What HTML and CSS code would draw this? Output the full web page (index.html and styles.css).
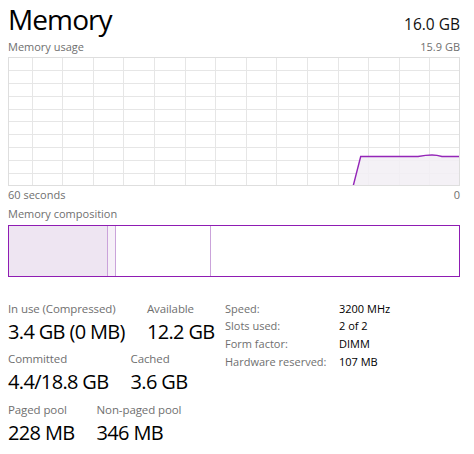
FILE: index.html
```html
<!DOCTYPE html>
<html>
<head>
<meta charset="utf-8">
<link rel="stylesheet" href="styles.css">
</head>
<body>
<div class="panel">
  <div class="head">
    <div class="title">Memory</div>
    <div class="total">16.0 GB</div>
  </div>
  <div class="caption-row mt3">
    <span>Memory usage</span>
    <span>15.9 GB</span>
  </div>
  <svg class="graph" width="452" height="129" viewBox="0 0 452 129">
    <g stroke="#e6e6e6" stroke-width="1">
      <line x1="0" y1="13.5" x2="452" y2="13.5"/>
      <line x1="0" y1="26.5" x2="452" y2="26.5"/>
      <line x1="0" y1="39.5" x2="452" y2="39.5"/>
      <line x1="0" y1="52.5" x2="452" y2="52.5"/>
      <line x1="0" y1="64.5" x2="452" y2="64.5"/>
      <line x1="0" y1="77.5" x2="452" y2="77.5"/>
      <line x1="0" y1="90.5" x2="452" y2="90.5"/>
      <line x1="0" y1="103.5" x2="452" y2="103.5"/>
      <line x1="0" y1="116.5" x2="452" y2="116.5"/>
      <line x1="24.5" y1="0" x2="24.5" y2="129"/>
      <line x1="54.5" y1="0" x2="54.5" y2="129"/>
      <line x1="85.5" y1="0" x2="85.5" y2="129"/>
      <line x1="115.5" y1="0" x2="115.5" y2="129"/>
      <line x1="146.5" y1="0" x2="146.5" y2="129"/>
      <line x1="177.5" y1="0" x2="177.5" y2="129"/>
      <line x1="207.5" y1="0" x2="207.5" y2="129"/>
      <line x1="238.5" y1="0" x2="238.5" y2="129"/>
      <line x1="268.5" y1="0" x2="268.5" y2="129"/>
      <line x1="299.5" y1="0" x2="299.5" y2="129"/>
      <line x1="330.5" y1="0" x2="330.5" y2="129"/>
      <line x1="360.5" y1="0" x2="360.5" y2="129"/>
      <line x1="391.5" y1="0" x2="391.5" y2="129"/>
      <line x1="421.5" y1="0" x2="421.5" y2="129"/>
    </g>
    <path d="M345.3 128.5 L352.7 99.5 L410 99.5 Q418 98 424 98 Q429 98 434 99.5 L452 99.5 L452 128.5 Z" fill="#f2eef4" fill-opacity="0.85"/>
    <path d="M345.3 128.5 L352.7 99.5 L410 99.5 Q418 98 424 98 Q429 98 434 99.5 L452 99.5" fill="none" stroke="#9426b8" stroke-width="1.4"/>
    <rect x="0.5" y="0.5" width="451" height="128" fill="none" stroke="#dedede" stroke-width="1"/>
  </svg>
  <div class="caption-row mt1">
    <span>60 seconds</span>
    <span>0</span>
  </div>
  <div class="caption-row mt4">
    <span>Memory composition</span>
  </div>
  <div class="composition">
    <div class="seg seg-inuse"></div>
    <div class="seg seg-modified"></div>
    <div class="seg seg-standby"></div>
    <div class="seg seg-free"></div>
  </div>
  <div class="stats">
    <div class="stats-left">
      <div class="stat-row">
        <div class="stat">
          <div class="stat-label">In use (Compressed)</div>
          <div class="stat-value">3.4 GB (0 MB)</div>
        </div>
        <div class="stat">
          <div class="stat-label">Available</div>
          <div class="stat-value">12.2 GB</div>
        </div>
      </div>
      <div class="stat-row">
        <div class="stat">
          <div class="stat-label">Committed</div>
          <div class="stat-value">4.4/18.8 GB</div>
        </div>
        <div class="stat">
          <div class="stat-label">Cached</div>
          <div class="stat-value">3.6 GB</div>
        </div>
      </div>
      <div class="stat-row">
        <div class="stat">
          <div class="stat-label">Paged pool</div>
          <div class="stat-value">228 MB</div>
        </div>
        <div class="stat">
          <div class="stat-label">Non-paged pool</div>
          <div class="stat-value">346 MB</div>
        </div>
      </div>
    </div>
    <div class="props">
      <div class="prop-label">Speed:</div><div class="prop-value">3200 MHz</div>
      <div class="prop-label">Slots used:</div><div class="prop-value">2 of 2</div>
      <div class="prop-label">Form factor:</div><div class="prop-value">DIMM</div>
      <div class="prop-label">Hardware reserved:</div><div class="prop-value">107 MB</div>
    </div>
  </div>
</div>
</body>
</html>
```
FILE: styles.css
```css
html, body {
  margin: 0;
  padding: 0;
  background: #ffffff;
}
body {
  font-family: "Open Sans", "Noto Sans", sans-serif;
  color: #000;
}
.panel {
  width: 452px;
  padding: 2px 14px 0 8px;
}
.head {
  display: flex;
  justify-content: space-between;
  align-items: baseline;
  height: 34px;
}
.title {
  font-size: 28px;
  line-height: 34px;
  letter-spacing: -0.9px;
}
.total {
  font-size: 15.5px;
  line-height: 34px;
  color: #111;
}
.caption-row {
  display: flex;
  justify-content: space-between;
  font-size: 11px;
  line-height: 15px;
  color: #6f6f6f;
}
.mt1 { margin-top: 1px; }
.mt3 { margin-top: 3px; }
.mt4 { margin-top: 4px; }
.graph {
  display: block;
  margin-top: 3px;
}
.composition {
  margin-top: 4px;
  height: 50px;
  border: 1px solid #8f1cb3;
  display: flex;
}
.seg {
  height: 100%;
  box-sizing: border-box;
  border-right: 1px solid #caa3da;
}
.seg-inuse {
  width: 99px;
  background: #eee5f2;
}
.seg-modified {
  width: 8px;
  background: #f6f0f8;
}
.seg-standby {
  width: 95px;
}
.seg-free {
  flex: 1;
  border-right: none;
}
.stats {
  margin-top: 23.5px;
  display: grid;
  grid-template-columns: 217px 1fr;
}
.stats-left {
  display: flex;
  flex-direction: column;
  gap: 6.5px;
}
.stat-row {
  display: flex;
  gap: 22px;
}
.stat-label {
  font-size: 11.5px;
  line-height: 16px;
  letter-spacing: -0.1px;
  color: #6f6f6f;
  margin-bottom: 2px;
  white-space: nowrap;
}
.stat-value {
  font-size: 20px;
  line-height: 26px;
  letter-spacing: -0.65px;
  white-space: nowrap;
}
.props {
  display: grid;
  grid-template-columns: 114px auto;
  grid-auto-rows: 17.7px;
  align-content: start;
  margin-top: -1px;
  font-size: 11px;
  line-height: 17.7px;
}
.prop-label {
  color: #6f6f6f;
  white-space: nowrap;
}
.prop-value {
  color: #000;
  white-space: nowrap;
}
```
